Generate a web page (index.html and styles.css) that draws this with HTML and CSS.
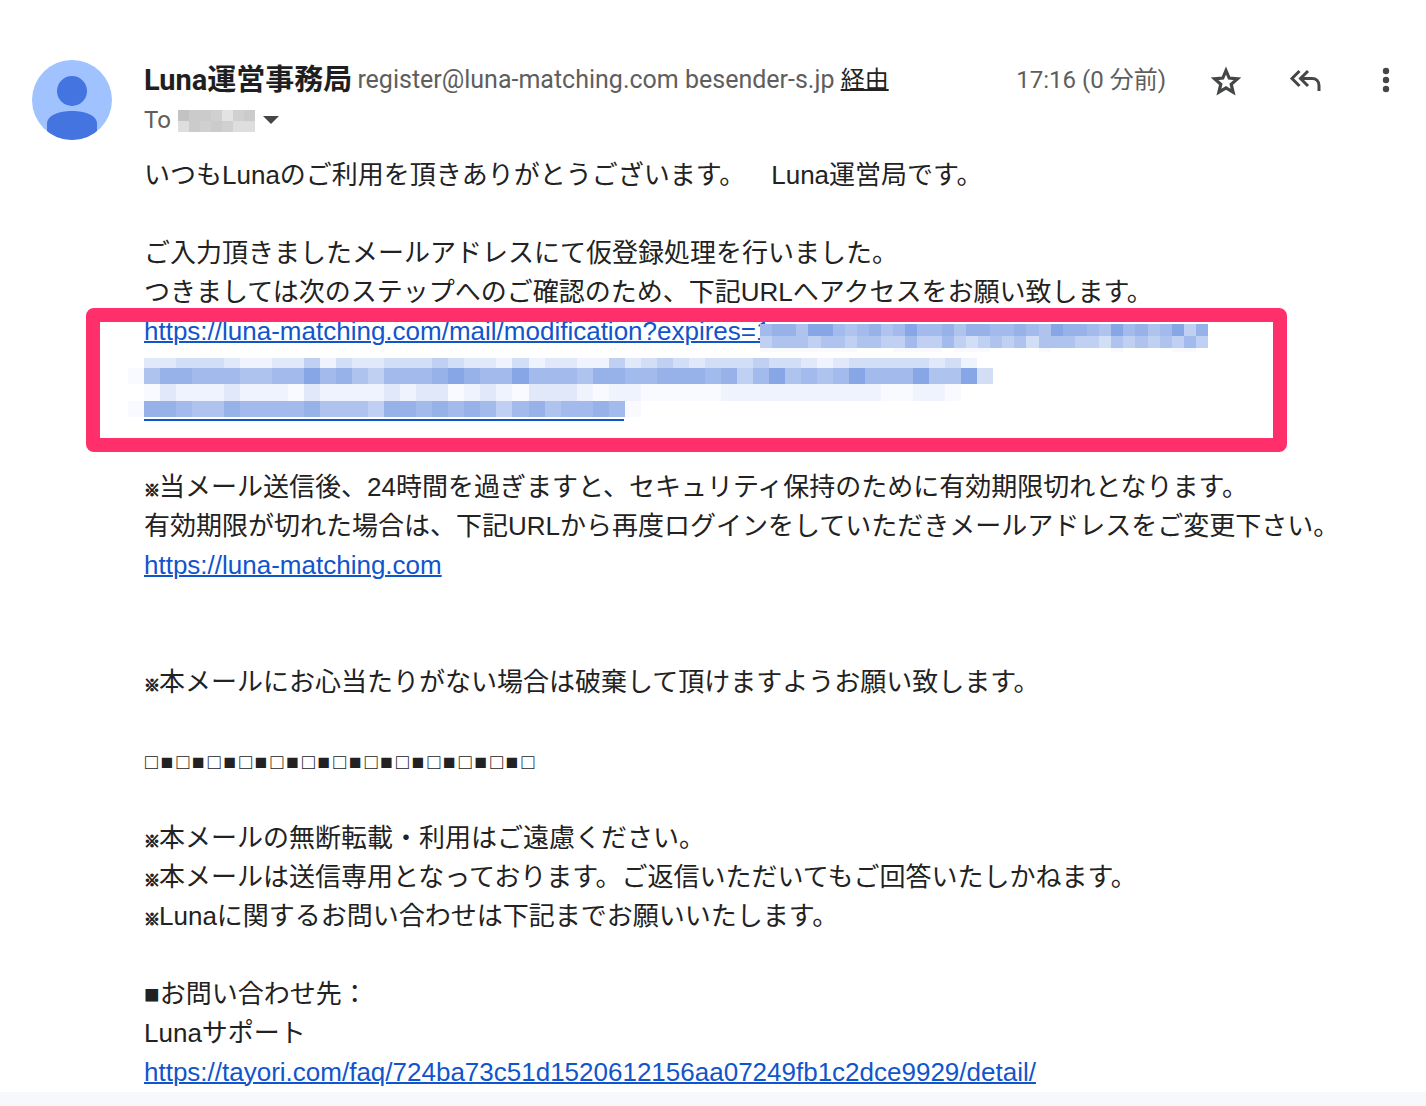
FILE: index.html
```html
<!DOCTYPE html>
<html lang="ja">
<head>
<meta charset="utf-8">
<meta name="viewport" content="width=device-width, initial-scale=1">
<title>Luna運営事務局</title>
<link rel="stylesheet" href="styles.css">
</head>
<body>
<main class="message">
  <svg class="avatar" viewBox="0 0 80 80" aria-hidden="true">
    <defs><clipPath id="round"><circle cx="40" cy="40" r="40"/></clipPath></defs>
    <g clip-path="url(#round)">
      <rect width="80" height="80" fill="#a0c2ff"/>
      <circle cx="40" cy="31" r="15" fill="#4374e0"/>
      <path d="M15 80V64C15 55 27 51 40 51s25 4 25 13v16z" fill="#4374e0"/>
    </g>
  </svg>
  <div class="content">
    <header class="header">
      <div class="sender">
        <h1 class="name">Luna運営事務局</h1>
        <span class="address">register@luna-matching.com besender-s.jp <a class="via" href="#via">経由</a></span>
      </div>
      <div class="actions">
        <time class="time">17:16 (0 分前)</time>
        <button class="icon-button" type="button" aria-label="スター">
          <svg width="40" height="40" viewBox="0 0 40 40"><path fill="none" stroke="#444746" stroke-width="3.200" d="M20 10.500l3.200 7.600 8.200.700-6.200 5.400 1.900 8-7.100-4.300-7.100 4.300 1.900-8-6.200-5.400 8.200-.700z"/></svg>
        </button>
        <button class="icon-button" type="button" aria-label="全員に返信">
          <svg width="40" height="40" viewBox="0 0 40 40" fill="none" stroke="#444746" stroke-width="3"><path d="M13.500 11L6 18.500l7.500 7.500M22 11l-7.500 7.500L22 26M14.500 18.500H26c4.500 0 7 3 7 7V31"/></svg>
        </button>
        <button class="icon-button" type="button" aria-label="その他">
          <svg width="40" height="40" viewBox="0 0 40 40" fill="#444746"><circle cx="20" cy="11" r="3.200"/><circle cx="20" cy="20" r="3.200"/><circle cx="20" cy="29" r="3.200"/></svg>
        </button>
      </div>
    </header>
    <div class="recipient">
      <span>To</span>
      <svg class="mosaic-name" width="78" height="24" data-x="0" data-cell="11" data-tops="2 13 24" data-tone="gray" data-rows="6554245 3545433"></svg>
      <button class="details" type="button" aria-label="詳細を表示"><svg width="16" height="8" viewBox="0 0 16 8"><path fill="#444746" d="M0 0h16L8 8z"/></svg></button>
    </div>
    <div class="text">
      <p>いつもLunaのご利用を頂きありがとうございます。　Luna運営局です。</p>
      <p>ご入力頂きましたメールアドレスにて仮登録処理を行いました。<br>つきましては次のステップへのご確認のため、下記URLへアクセスをお願い致します。</p>
      <div class="redacted">
        <a href="#modification">https://luna-matching.com/mail/modification?expires=1</a>
        <svg class="mosaic-first" width="460" height="28" data-x="0" data-cell="12.110" data-tops="0 12 24 28" data-tone="blue" data-rows="7886997678679778688778769887697867958 5666566566557557545656466655465656575 111111110001111011100001000001000011"></svg>
        <svg class="mosaic-rest" width="866" height="60" data-x="0" data-cell="16.020" data-tops="0 10 26 43 59" data-tone="blue" data-rows="033444322335243344454332423322534543444544323444443420 168877766779786577789877977768877888785796767977796694 01322232221322223233123213332122111112222222222112210 18876687777866658878787578677871"></svg>
        <span class="frame"></span>
      </div>
      <p><span class="mark">※</span>当メール送信後、24時間を過ぎますと、セキュリティ保持のために有効期限切れとなります。<br>有効期限が切れた場合は、下記URLから再度ログインをしていただきメールアドレスをご変更下さい。<br><a href="#luna">https://luna-matching.com</a></p>
      <p class="apart"><span class="mark">※</span>本メールにお心当たりがない場合は破棄して頂けますようお願い致します。</p>
      <p class="divider"><span>□</span><span>■</span><span>□</span><span>■</span><span>□</span><span>■</span><span>□</span><span>■</span><span>□</span><span>■</span><span>□</span><span>■</span><span>□</span><span>■</span><span>□</span><span>■</span><span>□</span><span>■</span><span>□</span><span>■</span><span>□</span><span>■</span><span>□</span><span>■</span><span>□</span></p>
      <p><span class="mark">※</span>本メールの無断転載・利用はご遠慮ください。<br><span class="mark">※</span>本メールは送信専用となっております。ご返信いただいてもご回答いたしかねます。<br><span class="mark">※</span>Lunaに関するお問い合わせは下記までお願いいたします。</p>
      <p>■お問い合わせ先：<br>Lunaサポート<br><a href="#tayori">https://tayori.com/faq/724ba73c51d1520612156aa07249fb1c2dce9929/detail/</a></p>
    </div>
  </div>
</main>
<script src="mosaic.js"></script>
</body>
</html>
```
FILE: styles.css
```css
* { box-sizing: border-box; }
body {
  margin: 0;
  background: #f6f8fc;
  color: #222;
}
.message {
  display: flex;
  gap: 32px;
  padding: 60px 20px 0 32px;
  background: #fff;
}
.avatar { flex: none; width: 80px; height: 80px; }
.content { flex: 1; min-width: 0; }
.header {
  display: flex;
  justify-content: space-between;
  height: 40px;
  color: #5e5e5e;
  font: 25px/40px Roboto, "Noto Sans CJK JP", sans-serif;
  white-space: nowrap;
}
.sender { display: flex; gap: 5px; }
.name {
  margin: 0;
  color: #1f1f1f;
  font: bold 29px/40px Roboto, "Noto Sans CJK JP", sans-serif;
}
.via {
  color: #222;
  font-size: 24px;
  text-decoration-thickness: 2px;
}
.time { font-size: 24px; }
.actions { display: flex; gap: 40px; }
button {
  display: flex;
  padding: 0;
  border: 0;
  background: none;
}
.recipient {
  display: flex;
  align-items: center;
  gap: 7px;
  height: 40px;
  color: #5e5e5e;
  font: 24px/40px Roboto, sans-serif;
}
.text {
  margin-top: 16px;
  font: 26px/39px "Liberation Sans", "Noto Sans CJK JP", sans-serif;
  text-spacing-trim: space-all;
}
.text p { margin: 0 0 39px; }
.text p:last-child { margin-bottom: 0; }
.text a { color: #15c; text-decoration-thickness: 2px; }
.text .apart { margin-top: 78px; }
.mark {
  display: inline-block;
  width: 15px;
  font-size: 16px;
  line-height: 16px;
  -webkit-text-stroke: 1px #222;
}
.divider { height: 39px; }
.divider span {
  padding: 0 2px 0 1px;
  font-size: 21px;
  line-height: 21px;
}
.redacted {
  position: relative;
  height: 117px;
  margin: -39px 0 39px;
}
.redacted::after {
  content: "";
  position: absolute;
  top: 107px;
  left: 0;
  width: 480px;
  height: 2px;
  background: #15c;
}
.mosaic-first { position: absolute; top: 12px; left: 616px; background: #fff; }
.mosaic-rest { position: absolute; top: 46px; left: -16px; }
.frame {
  position: absolute;
  top: -4px;
  right: 119px;
  left: -58px;
  height: 144px;
  border: 14px solid #ff2f6c;
  border-radius: 8px;
}
```
FILE: mosaic.js
```js
// Fills each mosaic with cells; every digit in a row is a shade index.
const tones = {
  blue: ["none", "#f8faff", "#eff3fd", "#e0e8f9", "#d2ddf6", "#c0d0f2", "#aec4ee", "#a2bbec", "#97b2e9", "#87a6e5"],
  gray: ["none", "#f8f8f8", "#e3e3e3", "#dedede", "#d0d0d0", "#cbcbcb", "#c3c3c3"]
};
document.querySelectorAll("svg[data-rows]").forEach((svg) => {
  const { cell, tops, tone, rows } = svg.dataset;
  const edges = tops.split(" ").map(Number);
  rows.split(" ").forEach((row, r) => {
    [...row].forEach((shade, c) => {
      const rect = document.createElementNS("http://www.w3.org/2000/svg", "rect");
      const left = Math.round(c * cell);
      rect.setAttribute("x", left);
      rect.setAttribute("y", edges[r]);
      rect.setAttribute("width", Math.round((c + 1) * cell) - left);
      rect.setAttribute("height", edges[r + 1] - edges[r]);
      rect.setAttribute("fill", tones[tone][shade]);
      svg.append(rect);
    });
  });
});
```
